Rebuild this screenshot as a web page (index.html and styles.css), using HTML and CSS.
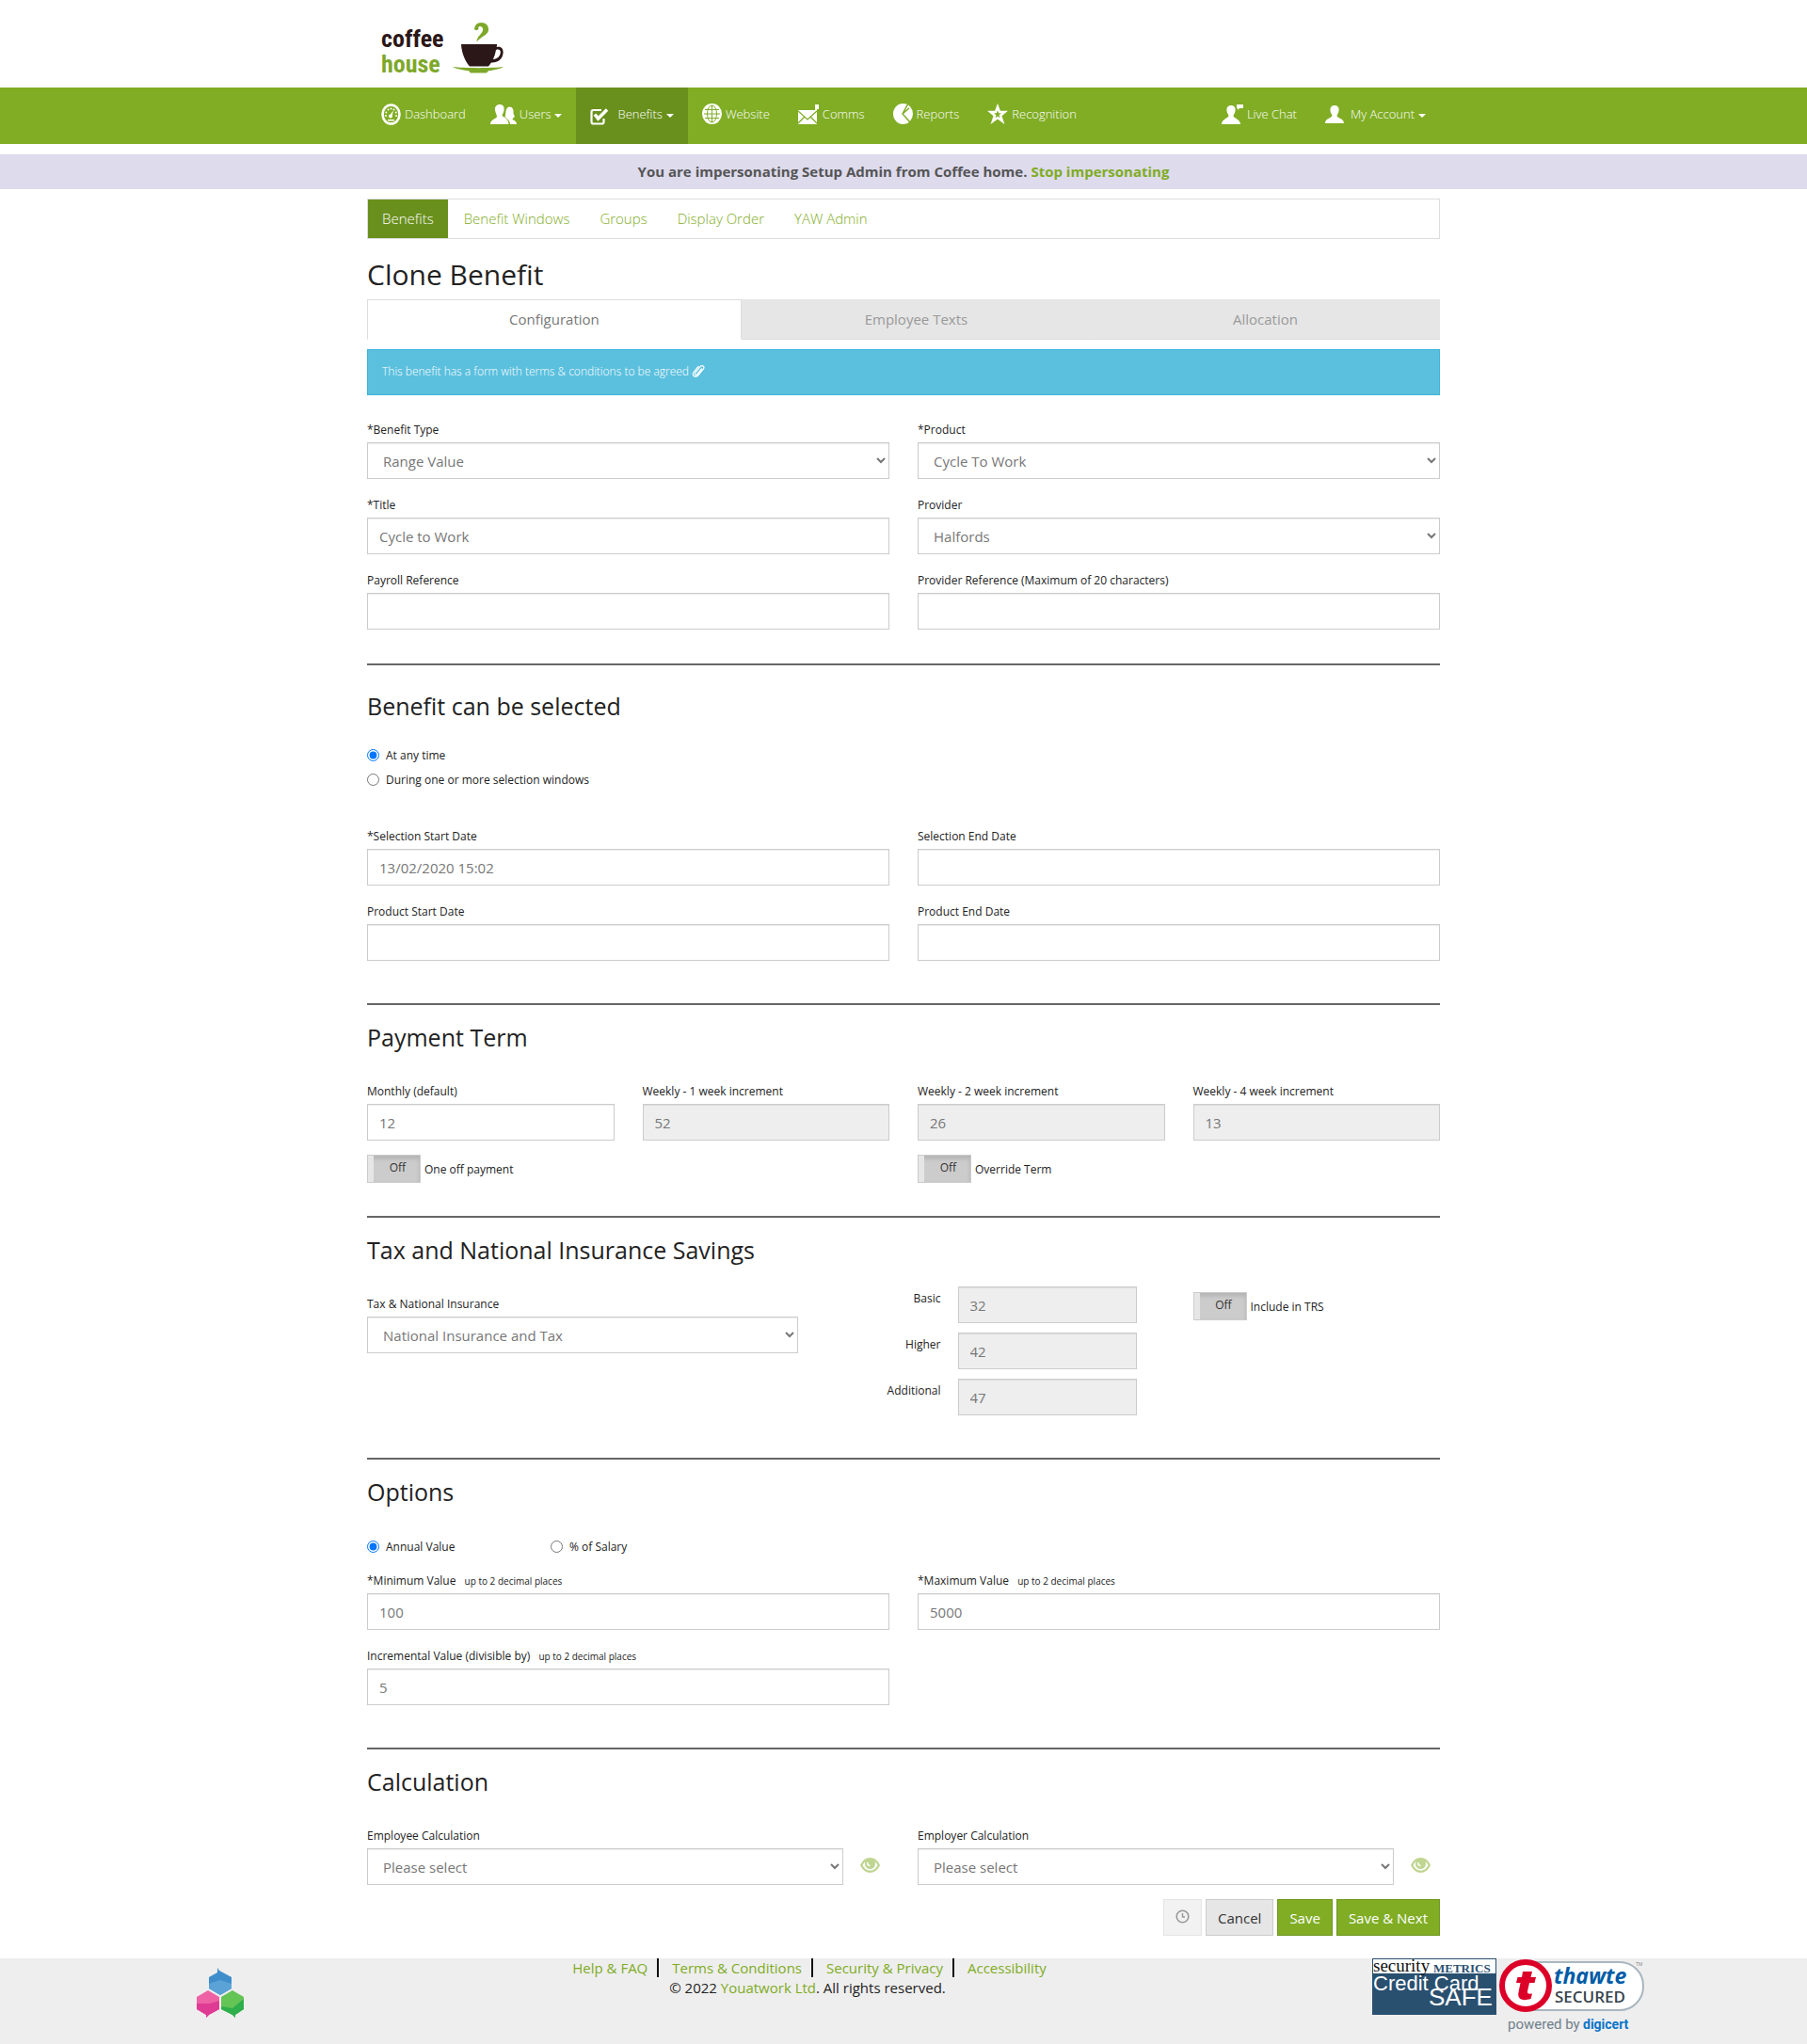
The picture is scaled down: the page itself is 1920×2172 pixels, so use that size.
FILE: index.html
```
<!DOCTYPE html>
<html lang="en">
<head>
    <meta charset="utf-8">
    <title>Clone Benefit</title>
    <link rel="stylesheet" href="styles.css">
</head>
<body>
    <header class="container header">
        <svg class="logo" width="135" height="72" viewBox="0 -6 135 72" role="img" aria-label="coffee house">
            <text class="logo-text" x="0" y="30" fill="#2b1718">coffee</text>
            <text class="logo-text" x="0" y="57" fill="#7ea82a">house</text>
            <path fill="#2b1718" d="M85 27h38c0 1 0 2-.3 3 5-1.500 7.500 2 6.800 7-.8 6-6 10-12.500 9.500l-3 4H94c-5-6-8.500-14-9-23.500zm37 6c-.7 4-1.700 7-3.200 10 5-.5 7.700-3.500 8-7 .2-3-1.800-4.200-4.800-3z"/>
            <path fill="#7ea82a" d="M76 51c12 1.500 43 1.500 54 0-3 2-9 3.500-16 4.200l-2 2.300H95l-2-2.300c-7-.7-14-2.200-17-4.200z"/>
            <path fill="#7ea82a" d="M99 10.500c.5-4 3.500-6.500 7.500-6.500 5 0 8 3.500 7.500 8-.6 5.500-7 6-12.500 12.500 0-6 5.500-8 6.500-12 .5-2.500-.7-4.500-3-4.500-1.500 0-2 1.200-1.500 2.800-.8 1.800-4 2-4.500-.3z"/>
        </svg>
    </header>

    <nav class="navbar">
        <div class="container navbar-inner">
            <ul class="nav">
                <li><a href="#">
                    <svg width="21" height="23" viewBox="0 0 21 23">
                        <ellipse cx="10.500" cy="11.500" rx="9" ry="10" fill="none" stroke="#fff" stroke-width="2.600"/>
                        <g fill="#fff">
                            <circle cx="5" cy="13" r="1"/><circle cx="5.300" cy="9.500" r="1"/><circle cx="7.500" cy="6.500" r="1"/>
                            <circle cx="10.500" cy="5.500" r="1"/><circle cx="13.500" cy="6.500" r="1"/><circle cx="15.700" cy="9.500" r="1"/><circle cx="16" cy="13" r="1"/>
                            <circle cx="10" cy="13.500" r="2"/>
                            <path d="M8.500 13L13 7.500l-1.500 6zM7 17h7v1.500H7z"/>
                        </g>
                    </svg>
                    Dashboard</a></li>
                <li><a href="#" class="users">
                    <svg width="28" height="21" viewBox="0 0 28 21" fill="#fff">
                        <path d="M10 0c3.500 0 5 2.500 4.500 6-.3 2.500-1.500 4-2 5.500 0 2 7 2.500 7 9.500H0c0-5 6.500-6 7-8 0-2-1.500-3.500-2-7C4.500 2.500 6.500 0 10 0z"/>
                        <path d="M20.500 2.500c3 0 4.500 3 4 6.500 0 2 2 3 1 4.500-.8 1-2 1-2 2 .5 1.500 4.500 1.500 4.500 5.500h-7c0-4-3-5.500-5.500-7.500 1-3 .5-4 1-6.500.5-3 2-4.500 4-4.500z"/>
                    </svg>
                    Users <span class="caret"></span></a></li>
                <li class="active"><a href="#" class="benefits">
                    <svg width="20" height="19" viewBox="0 0 20 19" fill="none" stroke="#fff">
                        <path d="M12 3H3.500Q1.500 3 1.500 5v10.500q0 2 2 2h9q2 0 2-2V12" stroke-width="2.200"/>
                        <path d="M5 7.500l3.500 4.500L18 2.500" stroke-width="3.500"/>
                    </svg>
                    Benefits <span class="caret"></span></a></li>
                <li><a href="#">
                    <svg width="21" height="22" viewBox="0 0 21 22">
                        <ellipse cx="10.500" cy="11" rx="10.500" ry="11" fill="#fff"/>
                        <g fill="none" stroke="#7fac24">
                            <path d="M3 6.500h15M2 11h17M3 15.500h15M10.500 2v18"/>
                            <ellipse cx="10.500" cy="11" rx="5" ry="9"/>
                        </g>
                    </svg>
                    Website</a></li>
                <li><a href="#">
                    <svg width="22" height="22" viewBox="0 0 22 22">
                        <path fill="#fff" d="M0 7h18V1h4v5h-2v16H0z"/>
                        <path fill="none" stroke="#7fac24" stroke-width="1.300" d="M0 8l10 9L20 8M0 21l7-7M20 21l-7-7"/>
                    </svg>
                    Comms</a></li>
                <li><a href="#">
                    <svg width="21" height="22" viewBox="0 0 21 22">
                        <ellipse cx="10.500" cy="11" rx="10.500" ry="11" fill="#fff"/>
                        <path fill="none" stroke="#7fac24" stroke-width="1.500" d="M15.500 1L10 11l8 9M10 11l7-6"/>
                    </svg>
                    Reports</a></li>
                <li><a href="#">
                    <svg width="22" height="22" viewBox="0 0 22 22" fill="none" stroke="#fff" stroke-width="2.500">
                        <path d="M11 3.500l2 5.500h5.500l-4.500 3.700 2 6-5-3.700-5 3.700 2-6L3.500 9H9z"/>
                    </svg>
                    Recognition</a></li>
            </ul>
            <ul class="nav">
                <li><a href="#">
                    <svg width="23" height="21" viewBox="0 0 23 21" fill="#fff">
                        <path d="M10 1c3.500 0 5 2.500 4.500 6-.3 2-1.500 3.500-2 5 0 2.500 7.500 3.500 7.500 9H0c0-5.500 7-6.500 7.500-9-.5-1.500-1.700-3-2-5C5 3.500 6.500 1 10 1zM16 0h7v4h-4l-2 2V4h-1z"/>
                    </svg>
                    Live Chat</a></li>
                <li><a href="#" class="account">
                    <svg width="20" height="19" viewBox="0 0 20 19" fill="#fff">
                        <path d="M10 0c3.500 0 5 2.500 4.500 6-.3 2-1.500 3.500-2 5 0 2.500 7.500 2.500 7.500 8H0c0-5.500 7-5.500 7.500-8-.5-1.500-1.700-3-2-5C5 2.500 6.500 0 10 0z"/>
                    </svg>
                    My Account <span class="caret"></span></a></li>
            </ul>
        </div>
    </nav>

    <div class="impersonating">You are impersonating Setup Admin from Coffee home. <a href="#">Stop impersonating</a></div>

    <main class="container">
        <nav class="subnav">
            <a href="#" class="active">Benefits</a>
            <a href="#">Benefit Windows</a>
            <a href="#">Groups</a>
            <a href="#">Display Order</a>
            <a href="#">YAW Admin</a>
        </nav>

        <h1>Clone Benefit</h1>

        <div class="tabs">
            <a href="#" class="tab active">Configuration</a>
            <a href="#" class="tab">Employee Texts</a>
            <a href="#" class="tab">Allocation</a>
        </div>

        <div class="alert">
            This benefit has a form with terms &amp; conditions to be agreed
            <svg width="14" height="14" viewBox="0 0 14 14" fill="none" stroke="#fff" stroke-width="1.200" stroke-linecap="round">
                <path d="M10.500 5L6 10.500c-1.500 1.700-3.500.2-2.300-1.500L9 2.700c2-2.200 5.200-.2 3.500 2.300L7 11.500c-3 3.500-7.500.5-5-3L7 2.500"/>
            </svg>
        </div>

        <form>
            <section class="general">
                <div class="row">
                    <div class="field col-6">
                        <label for="benefit_type">*Benefit Type</label>
                        <select id="benefit_type" class="control"><option>Range Value</option></select>
                    </div>
                    <div class="field col-6">
                        <label for="product">*Product</label>
                        <select id="product" class="control"><option>Cycle To Work</option></select>
                    </div>
                    <div class="field col-6">
                        <label for="title">*Title</label>
                        <input type="text" id="title" class="control" value="Cycle to Work">
                    </div>
                    <div class="field col-6">
                        <label for="provider">Provider</label>
                        <select id="provider" class="control"><option>Halfords</option></select>
                    </div>
                    <div class="field col-6">
                        <label for="payroll_ref">Payroll Reference</label>
                        <input type="text" id="payroll_ref" class="control">
                    </div>
                    <div class="field col-6">
                        <label for="provider_ref">Provider Reference (Maximum of 20 characters)</label>
                        <input type="text" id="provider_ref" class="control">
                    </div>
                </div>
            </section>

            <section class="selection">
                <h2>Benefit can be selected</h2>
                <div class="radios stacked">
                    <label><input type="radio" name="when" checked> At any time</label>
                    <label><input type="radio" name="when"> During one or more selection windows</label>
                </div>
                <div class="row">
                    <div class="field col-6">
                        <label for="sel_start">*Selection Start Date</label>
                        <input type="text" id="sel_start" class="control" value="13/02/2020 15:02">
                    </div>
                    <div class="field col-6">
                        <label for="sel_end">Selection End Date</label>
                        <input type="text" id="sel_end" class="control">
                    </div>
                    <div class="field col-6">
                        <label for="prod_start">Product Start Date</label>
                        <input type="text" id="prod_start" class="control">
                    </div>
                    <div class="field col-6">
                        <label for="prod_end">Product End Date</label>
                        <input type="text" id="prod_end" class="control">
                    </div>
                </div>
            </section>

            <section>
                <h2>Payment Term</h2>
                <div class="row">
                    <div class="field col-3">
                        <label for="monthly">Monthly (default)</label>
                        <input type="text" id="monthly" class="control" value="12">
                    </div>
                    <div class="field col-3">
                        <label for="weekly1">Weekly - 1 week increment</label>
                        <input type="text" id="weekly1" class="control" value="52" disabled>
                    </div>
                    <div class="field col-3">
                        <label for="weekly2">Weekly - 2 week increment</label>
                        <input type="text" id="weekly2" class="control" value="26" disabled>
                    </div>
                    <div class="field col-3">
                        <label for="weekly4">Weekly - 4 week increment</label>
                        <input type="text" id="weekly4" class="control" value="13" disabled>
                    </div>
                    <div class="col-6">
                        <label class="switch"><input type="checkbox"><span class="switch-box">Off</span> One off payment</label>
                    </div>
                    <div class="col-6">
                        <label class="switch"><input type="checkbox"><span class="switch-box">Off</span> Override Term</label>
                    </div>
                </div>
            </section>

            <section>
                <h2>Tax and National Insurance Savings</h2>
                <div class="row">
                    <div class="field col-5">
                        <label for="tax_ni">Tax &amp; National Insurance</label>
                        <select id="tax_ni" class="control"><option>National Insurance and Tax</option></select>
                    </div>
                    <div class="col-4 rates">
                        <label for="basic">Basic</label>
                        <input type="text" id="basic" class="control" value="32" disabled>
                        <label for="higher">Higher</label>
                        <input type="text" id="higher" class="control" value="42" disabled>
                        <label for="additional">Additional</label>
                        <input type="text" id="additional" class="control" value="47" disabled>
                    </div>
                    <div class="col-3">
                        <label class="switch"><input type="checkbox"><span class="switch-box">Off</span> Include in TRS</label>
                    </div>
                </div>
            </section>

            <section>
                <h2>Options</h2>
                <div class="radios">
                    <label><input type="radio" name="value_type" checked> Annual Value</label>
                    <label><input type="radio" name="value_type"> % of Salary</label>
                </div>
                <div class="row">
                    <div class="field col-6">
                        <label for="min_value">*Minimum Value <small>up to 2 decimal places</small></label>
                        <input type="text" id="min_value" class="control" value="100">
                    </div>
                    <div class="field col-6">
                        <label for="max_value">*Maximum Value <small>up to 2 decimal places</small></label>
                        <input type="text" id="max_value" class="control" value="5000">
                    </div>
                    <div class="field col-6">
                        <label for="inc_value">Incremental Value (divisible by) <small>up to 2 decimal places</small></label>
                        <input type="text" id="inc_value" class="control" value="5">
                    </div>
                </div>
            </section>

            <section class="calculation">
                <h2>Calculation</h2>
                <div class="row">
                    <div class="field col-6">
                        <label for="employee_calc">Employee Calculation</label>
                        <div class="with-eye">
                            <select id="employee_calc" class="control"><option>Please select</option></select>
                            <a href="#" class="eye" aria-label="View">
                                <svg width="21" height="16" viewBox="0 0 21 16">
                                    <path fill="none" stroke="#80ad24" stroke-width="2.200" d="M1.200 8C3.500 3.500 6.500 1.200 10.500 1.200s7 2.300 9.300 6.800c-2.300 4.500-5.300 6.800-9.300 6.800s-7-2.300-9.300-6.800z"/>
                                    <circle cx="10.500" cy="6.500" r="5.500" fill="#80ad24"/>
                                    <path fill="none" stroke="#fff" stroke-width="1.600" d="M8 5c-.5 2 .5 3.500 2.500 3.500"/>
                                </svg>
                            </a>
                        </div>
                    </div>
                    <div class="field col-6">
                        <label for="employer_calc">Employer Calculation</label>
                        <div class="with-eye">
                            <select id="employer_calc" class="control"><option>Please select</option></select>
                            <a href="#" class="eye" aria-label="View">
                                <svg width="21" height="16" viewBox="0 0 21 16">
                                    <path fill="none" stroke="#80ad24" stroke-width="2.200" d="M1.200 8C3.500 3.500 6.500 1.200 10.500 1.200s7 2.300 9.300 6.800c-2.300 4.500-5.300 6.800-9.300 6.800s-7-2.300-9.300-6.800z"/>
                                    <circle cx="10.500" cy="6.500" r="5.500" fill="#80ad24"/>
                                    <path fill="none" stroke="#fff" stroke-width="1.600" d="M8 5c-.5 2 .5 3.500 2.500 3.500"/>
                                </svg>
                            </a>
                        </div>
                    </div>
                </div>
                <div class="buttons">
                    <button type="button" class="btn" aria-label="History" disabled>
                        <svg width="15" height="15" viewBox="0 0 15 15" fill="none" stroke="#333">
                            <circle cx="7.500" cy="7.500" r="6.300" stroke-width="1.600"/>
                            <path d="M7.500 4v4H10" stroke-width="1.400"/>
                        </svg>
                    </button>
                    <button type="button" class="btn">Cancel</button>
                    <button type="button" class="btn btn-primary">Save</button>
                    <button type="button" class="btn btn-primary">Save &amp; Next</button>
                </div>
            </section>
        </form>
    </main>

    <footer class="footer">
        <div class="footer-logo">
            <svg width="50" height="53" viewBox="0 0 50 53">
                <path fill="#3f8ecb" d="M22 0l2 3 13 7v12l-12 7-12-7V10l9-5z"/>
                <path fill="#5ba3d6" d="M13 17l12-4 12 4v5l-12 7-12-7z"/>
                <path fill="#ee62a5" d="M12 24l12 7v13l-11 6-3 3v-3L0 44V31z"/>
                <path fill="#df3a94" d="M0 38l14 0 10-3v9l-11 6-3 3v-3L0 44z"/>
                <path fill="#64c456" d="M38 24l12 7v13l-9 6v3l-3-3-12-6V31z"/>
                <path fill="#2fae4c" d="M50 33L38 43l-12-2v3l12 6 3 3v-3l9-6z"/>
            </svg>
        </div>
        <div class="footer-text">
            <ul class="footer-links">
                <li><a href="#">Help &amp; FAQ</a></li>
                <li><a href="#">Terms &amp; Conditions</a></li>
                <li><a href="#">Security &amp; Privacy</a></li>
                <li><a href="#">Accessibility</a></li>
            </ul>
            <div>&copy; 2022 <a href="#">Youatwork Ltd</a>. All rights reserved.</div>
        </div>
        <div class="seals">
            <svg width="132" height="60" viewBox="0 0 132 60">
                <rect width="132" height="60" fill="#2a5070"/>
                <rect x="1" y="1" width="130" height="15" fill="#fff"/>
                <text x="1" y="14" class="serif" font-size="19" fill="#111">security</text>
                <text x="65" y="15" class="serif" font-size="13" font-weight="bold" fill="#2a5070">METRICS</text>
                <text x="1" y="34" class="sans" font-size="22" fill="#fff">Credit Card</text>
                <text x="60" y="50" class="sans" font-size="26" fill="#fff">SAFE</text>
            </svg>
            <svg width="158" height="84" viewBox="0 0 158 84">
                <rect x="8" y="4" width="145" height="51" rx="25" fill="#fff" stroke="#a9b6bf" stroke-width="2"/>
                <circle cx="28" cy="29" r="25" fill="#fff" stroke="#dc0028" stroke-width="6"/>
                <path fill="#dc0028" d="M25 14h10l-1.500 6H39l-1.500 6H32l-2 9c-.5 2 .5 3 5 2.500L33.500 43C24 46 19 43 20.500 36l2-10H18l1.500-6H24z"/>
                <text x="58" y="27" class="seal-name" font-size="23">thawte</text>
                <text x="59" y="47" class="seal-label" font-size="17">SECURED</text>
                <text x="145" y="8" class="sans" font-size="5" fill="#888">TM</text>
                <text x="9" y="75" class="seal-powered" font-size="15">powered by</text>
                <text x="89" y="75" class="seal-digicert" font-size="14">digicert</text>
            </svg>
        </div>
    </footer>
</body>
</html>
```
FILE: styles.css
```
* { box-sizing: border-box; }
body { margin: 0; font-family: "Open Sans", "Noto Sans", sans-serif; font-size: 15px; line-height: 21px; color: #222; background: #fff; }
a { color: #7fac24; text-decoration: none; }
ul { list-style: none; margin: 0; padding: 0; }
.container { max-width: 1170px; margin: 0 auto; padding: 0 15px; }

.header { height: 93px; padding-top: 14px; }
.logo { display: block; margin-left: 15px; }
.logo-text { font-family: "Liberation Sans Narrow", "Roboto Condensed", "Open Sans Condensed", Roboto, sans-serif; font-weight: bold; font-size: 26px; }

.navbar { background: #80ad24; }
.navbar-inner { display: flex; justify-content: space-between; }
.nav { display: flex; }
.nav a { display: flex; align-items: center; gap: 4px; height: 60px; padding: 0 15px 4px; color: #fff; font-size: 13px; font-weight: 300; }
.nav .active a { background: #69901d; }
.nav .users { gap: 3px; padding-left: 11px; }
.nav .benefits svg { margin: 4px 6px 0 0; }
.nav .account svg { margin-right: 3px; }
.caret { border: 4px solid transparent; border-top-color: #fff; border-bottom: 0; margin-top: 3px; }

.impersonating { margin: 11px 0 10px; background: #dedbed; color: #555; font-weight: 700; text-align: center; line-height: 37px; }

.subnav { display: flex; gap: 2px; border: 1px solid #ddd; }
.subnav a { padding: 0 15px; line-height: 41px; font-weight: 300; }
.subnav .active { background: #69901d; color: #fff; }

h1 { margin: 17px 0 6px; font-size: 30px; line-height: 41px; font-weight: 400; }
h2 { margin: 0 0 28px; font-size: 25px; line-height: 34px; font-weight: 400; }

.tabs { display: flex; }
.tab { flex: 371; height: 43px; line-height: 41px; text-align: center; color: #999; background: #e6e6e6; border: 1px solid #e6e6e6; border-bottom-color: #ddd; }
.tab.active { flex: 398; color: #777; background: #fff; border-color: #ddd; border-bottom-color: #fff; }

.alert { margin: 10px 0 24px; padding: 13px 15px; height: 49px; line-height: 19px; font-size: 12px; font-weight: 300; color: #fff; background: #5bc0de; border: 1px solid #3db5d8; }
.alert svg { vertical-align: -2px; }

section { padding: 17px 0 30px; border-bottom: 2px solid #666; }
.general { padding: 0 0 21px; }
.selection { padding-top: 26px; }
.selection h2 { margin-bottom: 22px; }
.calculation { padding-bottom: 24px; border-bottom: 0; }

.row { display: grid; grid-template-columns: repeat(12, 1fr); column-gap: 30px; }
.col-3 { grid-column: span 3; }
.col-4 { grid-column: span 4; }
.col-5 { grid-column: span 5; }
.col-6 { grid-column: span 6; }

label { font-size: 12px; }
small { margin-left: 6px; font-size: 10px; }
.field { margin-bottom: 15px; }
.field label { display: block; height: 26px; line-height: 25px; }
.control { display: block; width: 100%; height: 39px; padding: 0 12px; font-family: inherit; font-size: 15px; color: #777; background: #fff; border: 1px solid #ccc; border-radius: 0; box-shadow: inset 0 1px 1px rgba(0, 0, 0, .075); }
.control:disabled { background: #eee; opacity: 1; }

.radios { display: flex; margin-bottom: 11px; }
.radios label { display: flex; align-items: center; gap: 7px; width: 195px; height: 26px; }
.radios input { width: 13px; height: 13px; margin: 0; }
.radios.stacked { flex-direction: column; margin-bottom: 35px; }
.radios.stacked label { width: auto; }

.switch { display: flex; align-items: center; gap: 4px; height: 30px; margin-bottom: 5px; }
.switch input { position: absolute; opacity: 0; }
.switch-box { width: 57px; height: 30px; padding-left: 8px; line-height: 26px; text-align: center; color: #333; background: #ccc; border: 1px solid #ccc; box-shadow: inset 6px 0 #e6e6e6, inset 0 3px 5px rgba(0, 0, 0, .13); }

.rates { display: grid; grid-template-columns: 1fr 190px; gap: 10px 18px; margin-top: -6px; padding: 0 30px 15px 0; }
.rates label { line-height: 26px; text-align: right; }

.with-eye { display: flex; }
.eye { margin: 9px 10px 0 18px; line-height: 0; padding-top: 1px; opacity: .5; }

.buttons { display: flex; justify-content: flex-end; gap: 4px; }
.btn { height: 39px; padding: 0 12px; font-family: inherit; font-size: 15px; color: #333; background: #e6e6e6; border: 1px solid #ccc; }
.btn:disabled { opacity: .5; }
.btn-primary { color: #fff; background: #80ad24; border-color: #709820; }

.footer { display: grid; grid-template-columns: 16.666% 1fr 462px; min-height: 91px; background: #eee; }
.footer-logo { padding: 10px 61px 0 0; text-align: right; }
.footer-text { padding-right: 62px; text-align: center; }
.footer-links { display: flex; justify-content: center; }
.footer-links li { height: 20px; line-height: 20px; margin-bottom: 1px; padding: 0 10px 0 14px; }
.footer-links li + li { border-left: 2px solid #111; }
.seals { display: flex; align-items: flex-start; gap: 3px; }
.serif { font-family: "Liberation Serif", serif; }
.sans { font-family: "Liberation Sans", sans-serif; }
.seal-name { font-family: "Open Sans", sans-serif; font-weight: bold; font-style: italic; fill: #005ba6; }
.seal-label { font-family: "Open Sans", sans-serif; font-weight: 600; fill: #37444c; }
.seal-powered { font-family: Roboto, sans-serif; fill: #70808a; }
.seal-digicert { font-family: Roboto, sans-serif; font-weight: bold; fill: #0a75c9; }
```
